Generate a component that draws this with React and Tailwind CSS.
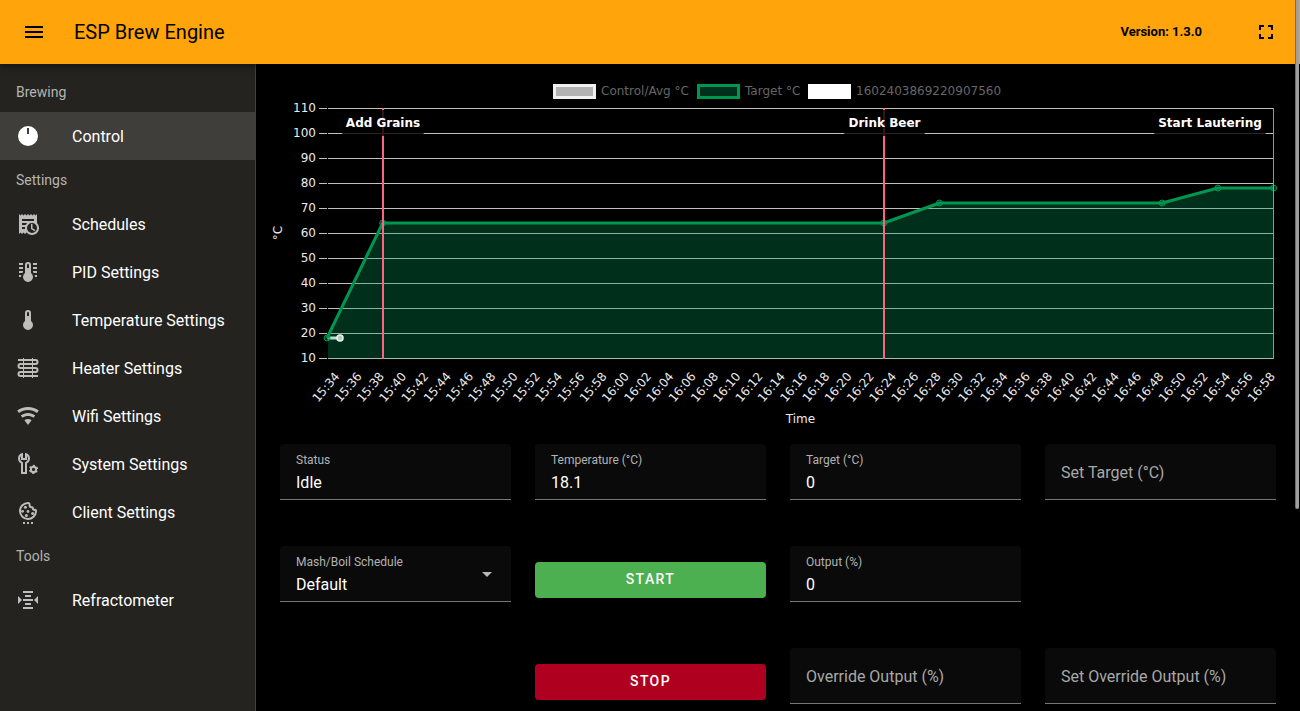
import React from "react";

function Icon({ children, className = "" }) {
  return (
    <svg viewBox="0 0 24 24" className={`size-6 shrink-0 ${className}`} fill="currentColor" aria-hidden="true">
      {children}
    </svg>
  );
}

const icons = {
  menu: <path d="M3 6H21V8H3V6M3 11H21V13H3V11M3 16H21V18H3V16Z" />,
  fullscreen: <path d="M5 5H10V7H7V10H5V5M14 5H19V10H17V7H14V5M17 14H19V19H14V17H17V14M10 17V19H5V14H7V17H10Z" />,
  knob: <path d="M12 2A10 10 0 1 0 12 22A10 10 0 1 0 12 2M13 10H11V4H13V10Z" fillRule="evenodd" />,
  receipt: (
    <path
      fillRule="evenodd"
      d="M21 11.11V2L19.5 3.5L18 2L16.5 3.5L15 2L13.5 3.5L12 2L10.5 3.5L9 2L7.5 3.5L6 2L4.5 3.5L3 2V22L4.5 20.5L6 22L7.5 20.5L9 22L10.58 20.42A7 7 0 1 0 21 11.11M6 7H18V9H6V7M6 11H11.11C10.5 11.57 10.04 12.25 9.68 13H6V11M6 17V15H9.07C9.03 15.33 9 15.66 9 16S9.03 16.67 9.07 17H6M16 21A5 5 0 1 1 16 11A5 5 0 1 1 16 21M16.5 16.25L19.36 17.94L18.61 19.16L15 17V12H16.5V16.25Z"
    />
  ),
  pid: (
    <path
      fillRule="evenodd"
      d="M17 3H21V5H17V3M17 7H21V9H17V7M17 11H21V13H17.75L17 12.1V11M21 15V17H19C19 16.31 18.9 15.63 18.71 15H21M7 3V5H3V3H7M7 7V9H3V7H7M7 11V12.1L6.25 13H3V11H7M3 15H5.29C5.1 15.63 5 16.31 5 17H3V15M15 13V5A3 3 0 0 0 9 5V13A5 5 0 1 0 15 13M12 4A1 1 0 0 1 13 5V8H11V5A1 1 0 0 1 12 4Z"
    />
  ),
  thermometer: (
    <path fillRule="evenodd" d="M15 13V5A3 3 0 0 0 9 5V13A5 5 0 1 0 15 13M12 4A1 1 0 0 1 13 5V8H11V5A1 1 0 0 1 12 4Z" />
  ),
  coil: (
    <g fill="none" stroke="currentColor">
      <path
        strokeWidth="2"
        d="M2 4H19.5A1.9 1.9 0 0 1 19.5 8H4.5A1.9 1.9 0 0 0 4.5 12H19.5A1.9 1.9 0 0 1 19.5 16H4.5A1.9 1.9 0 0 0 4.5 20H22"
      />
      <path strokeWidth="1" d="M7.5 2V22M16.5 2V22" />
    </g>
  ),
  wifi: (
    <path d="M12 21L15.6 16.2C14.6 15.45 13.35 15 12 15C10.65 15 9.4 15.45 8.4 16.2L12 21M12 3C7.95 3 4.21 4.34 1.2 6.6L3 9C5.5 7.12 8.62 6 12 6C15.38 6 18.5 7.12 21 9L22.8 6.6C19.79 4.34 16.05 3 12 3M12 9C9.3 9 6.81 9.89 4.8 11.4L6.6 13.8C8.1 12.67 9.97 12 12 12C14.03 12 15.9 12.67 17.4 13.8L19.2 11.4C17.19 9.89 14.7 9 12 9Z" />
  ),
  tools: (
    <>
      <path
        fill="none"
        stroke="currentColor"
        strokeWidth="2"
        d="M6 2.2C4.2 2.9 3 4.6 3 6.6C3 8.6 4.1 10 6 11V21H10V11C11.9 10 13 8.6 13 6.6C13 4.6 11.8 2.9 10 2.2V7H6Z"
      />
      <circle cx="17.5" cy="17.4" r="2.6" fill="none" stroke="currentColor" strokeWidth="2" />
      <circle cx="17.5" cy="17.4" r="3.8" fill="none" stroke="currentColor" strokeWidth="1.6" strokeDasharray="2 1.98" strokeDashoffset="1" transform="rotate(30 17.5 17.4)" />
    </>
  ),
  cookie: (
    <>
      <g transform="translate(0 2)">
        <path
          fill="none"
          stroke="currentColor"
          strokeWidth="2"
          strokeLinejoin="round"
          d="M12 1A8 8 0 1 0 20 9.2C20 8 19.6 7.6 18.6 7.9C17.5 8 16.8 7.3 16.9 6.3C16.9 5.5 16.2 5.1 15.4 5.2C14.3 5.2 13.6 4.6 13.6 3.6C13.7 1.6 13.2 1 12 1Z"
        />
        <circle cx="9.4" cy="5.3" r="1.5" />
        <circle cx="6.6" cy="9.3" r="1.4" />
        <circle cx="12" cy="9.5" r="1.4" />
        <circle cx="16.6" cy="11.6" r="1.5" />
        <circle cx="10.4" cy="13.6" r="1.5" />
      </g>
      <path d="M7 22H9V24H7V22M11 22H13V24H11V22M15 22H17V24H15V22Z" />
    </>
  ),
  altimeter: (
    <path d="M7 3H17V5H7V3M9 7H15V9H9V7M2 7.96V16.04L6.03 12L2 7.96M22.03 7.96L18 12L22.03 16.04V7.96M7 11H17V13H7V11M9 15H15V17H9V15M7 19H17V21H7V19Z" />
  ),
};

const sections = [
  { title: "Brewing", items: [["Control", "knob"]] },
  {
    title: "Settings",
    items: [
      ["Schedules", "receipt"],
      ["PID Settings", "pid"],
      ["Temperature Settings", "thermometer"],
      ["Heater Settings", "coil"],
      ["Wifi Settings", "wifi"],
      ["System Settings", "tools"],
      ["Client Settings", "cookie"],
    ],
  },
  { title: "Tools", items: [["Refractometer", "altimeter"]] },
];

function Sidebar() {
  return (
    <nav className="w-64 shrink-0 border-r border-[#40403e] bg-[#242320] pt-2">
      {sections.map((section) => (
        <section key={section.title}>
          <h2 className="flex h-10 items-center px-4 text-sm text-[#b4b4b2]">{section.title}</h2>
          <ul>
            {section.items.map(([label, icon]) => {
              const active = label === "Control";
              return (
                <li key={label}>
                  <a
                    href="#"
                    aria-current={active ? "page" : undefined}
                    className={`flex h-12 items-center gap-8 px-4 text-base ${active ? "bg-[#3f3e3b]" : ""}`}
                  >
                    <Icon className={active ? "text-white" : "text-[#bdbdbc]"}>{icons[icon]}</Icon>
                    <span className="whitespace-nowrap pt-0.5 text-white">{label}</span>
                  </a>
                </li>
              );
            })}
          </ul>
        </section>
      ))}
    </nav>
  );
}

const LEFT = 327;
const RIGHT = 1273.5;
const START = 15 * 60 + 33;
const END = 16 * 60 + 58;
const toX = (minute) => LEFT + ((minute - START) / (END - START)) * (RIGHT - LEFT);
const toY = (temp) => 358.5 - (temp - 10) * 2.5;

const target = [
  [0, 18],
  [5, 64],
  [50, 64],
  [55, 72],
  [75, 72],
  [80, 78],
  [85, 78],
].map(([m, t]) => [toX(START + m), toY(t) - 0.5]);

const yTicks = [10, 20, 30, 40, 50, 60, 70, 80, 90, 100, 110];
const xTicks = Array.from({ length: 43 }, (_, i) => START + 1 + i * 2);
const clock = (m) => `${Math.floor(m / 60)}:${String(m % 60).padStart(2, "0")}`;

const notes = [
  { text: "Add Grains", lineX: 383, lineWidth: 2, box: [341, 84] },
  { text: "Drink Beer", lineX: 884, lineWidth: 2, box: [843, 83] },
  { text: "Start Lautering", lineX: 1273.5, lineWidth: 1, box: [1153, 114] },
];

function Chart() {
  const line = target.map((p) => p.join(",")).join(" ");
  return (
    <svg
      viewBox="268 72 1020 360"
      className="block w-full font-['DejaVu_Sans',sans-serif] text-[12px]"
      role="img"
      aria-label="Temperature over time"
    >
      <g fill="#666666">
        <rect x="554.5" y="85.5" width="40" height="12" fill="#b2b2b2" stroke="#f0f0f0" strokeWidth="3" />
        <text x="601" y="95">Control/Avg °C</text>
        <rect x="698.5" y="85.5" width="40" height="12" fill="#00301b" stroke="#01964f" strokeWidth="3" />
        <text x="745" y="95">Target °C</text>
        <rect x="808" y="84" width="43" height="15" fill="#ffffff" />
        <text x="856" y="95">1602403869220907560</text>
      </g>

      {yTicks.map((t) => (
        <g key={t}>
          <path d={`M319 ${toY(t)}H327M328 ${toY(t)}H1274`} stroke="#c0c0c0" />
          <text x="316" y={toY(t) + 3} textAnchor="end" fill="#ebebeb">{t}</text>
        </g>
      ))}
      {xTicks.map((m) => (
        <text
          key={m}
          transform={`translate(${toX(m) - 1} 374) rotate(-50)`}
          textAnchor="end"
          dominantBaseline="central"
          fill="#ebebeb"
        >
          {clock(m)}
        </text>
      ))}
      <text x="800.5" y="423" textAnchor="middle" fill="#ebebeb">Time</text>
      <text transform="translate(282 233) rotate(-90)" textAnchor="middle" fill="#ebebeb">°C</text>

      <path d="M327.5 338H340" stroke="#ffffff" strokeWidth="3" />
      <polygon points={`328,358.5 328,338 ${line} ${RIGHT},358.5`} fill="#00a05a" fillOpacity="0.3" />
      <circle cx="340" cy="338" r="3" fill="#b2c8be" stroke="#f0f0f0" strokeWidth="1.5" />
      <polyline points={line} fill="none" stroke="#01964f" strokeWidth="3" strokeLinejoin="round" />
      {target.map(([x, y]) => (
        <circle key={x} cx={x} cy={y} r="3" fill="#019653" fillOpacity="0.3" stroke="#01964f" />
      ))}

      {notes.map(({ text, lineX, lineWidth, box: [x, width] }) => (
        <g key={text}>
          <path d={`M${lineX} 108V359`} stroke="#ff6384" strokeWidth={lineWidth} />
          <rect x={x} y="110" width={width} height="26" rx="6" fill="#000000" fillOpacity="0.8" />
          <text x={x + width / 2} y="127" textAnchor="middle" fontWeight="bold" fill="#ffffff">{text}</text>
        </g>
      ))}
    </svg>
  );
}

const fieldBox = "relative h-14 rounded-t border-b border-[#757575] bg-[#0a0a0a]";
const floatingLabel = "pointer-events-none absolute left-4 top-2 text-xs text-[#b2b2b2]";
const restingLabel = "pointer-events-none absolute left-4 top-[17px] text-base text-[#a8a8a8]";
const control = "size-full appearance-none bg-transparent px-4 pt-[22px] text-base text-white outline-none";

function Field({ id, label, value, className = "" }) {
  return (
    <div className={`${fieldBox} ${className}`}>
      <input id={id} type="text" defaultValue={value} className={control} />
      <label htmlFor={id} className={value ? floatingLabel : restingLabel}>{label}</label>
    </div>
  );
}

function ActionButton({ className, children }) {
  return (
    <button type="button" className={`mt-4 h-9 rounded pb-0.5 text-sm font-medium uppercase tracking-widest text-white ${className}`}>
      {children}
    </button>
  );
}

export default function App() {
  return (
    <div className="flex min-h-screen flex-col bg-black font-[Roboto,sans-serif] text-white">
      <header className="z-10 flex h-16 items-center bg-[#ffa40a] px-[22px] text-black shadow-[0_2px_6px_rgba(0,0,0,0.5)]">
        <button type="button" aria-label="Menu"><Icon>{icons.menu}</Icon></button>
        <h1 className="ml-7 text-xl">ESP Brew Engine</h1>
        <span className="ml-auto text-[13px] font-bold">Version: 1.3.0</span>
        <button type="button" aria-label="Fullscreen" className="ml-[52px]"><Icon>{icons.fullscreen}</Icon></button>
      </header>

      <div className="flex flex-1">
        <Sidebar />
        <main className="min-w-0 flex-1 px-3 pt-2">
          <Chart />
          <form className="grid grid-cols-4 items-start gap-x-6 gap-y-[46px] px-3 pt-3">
            <Field id="status" label="Status" value="Idle" />
            <Field id="temperature" label="Temperature (°C)" value="18.1" />
            <Field id="target" label="Target (°C)" value="0" />
            <Field id="set-target" label="Set Target (°C)" />

            <div className={fieldBox}>
              <select id="schedule" className={control} defaultValue="Default">
                <option>Default</option>
              </select>
              <label htmlFor="schedule" className={floatingLabel}>Mash/Boil Schedule</label>
              <svg viewBox="0 0 10 5" className="pointer-events-none absolute right-[19px] top-[26px] h-[5px] w-2.5" aria-hidden="true">
                <path d="M0 0H10L5 5Z" fill="#b8b8b8" />
              </svg>
            </div>
            <ActionButton className="bg-[#4caf50]">Start</ActionButton>
            <Field id="output" label="Output (%)" value="0" />

            <ActionButton className="col-start-2 row-start-3 bg-[#b00020]">Stop</ActionButton>
            <Field id="override" label="Override Output (%)" className="col-start-3 row-start-3" />
            <Field id="set-override" label="Set Override Output (%)" className="col-start-4 row-start-3" />
          </form>
        </main>
      </div>
      <div className="fixed right-px top-0 z-20 h-[509px] w-1 rounded-b-sm border-l border-[#6f6f6f] bg-[#a0a0a0]" />
    </div>
  );
}
